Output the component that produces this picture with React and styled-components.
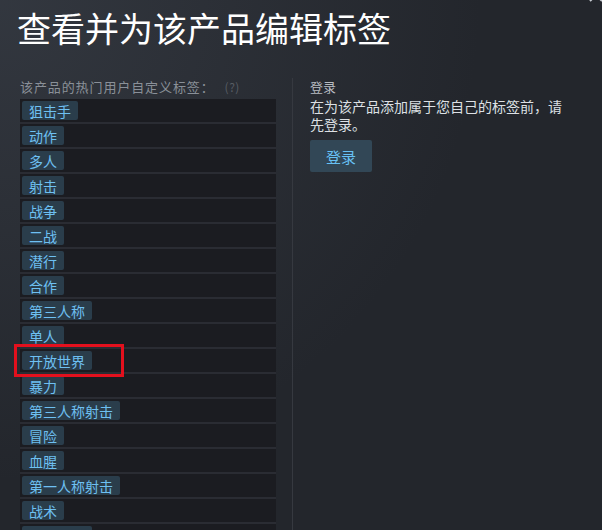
import React from 'react'
import styled, { createGlobalStyle } from 'styled-components'

const tags = [
  '狙击手', '动作', '多人', '射击', '战争', '二战', '潜行', '合作', '第三人称',
  '单人', '开放世界', '暴力', '第三人称射击', '冒险', '血腥', '第一人称射击', '战术', '现代战争',
]

const GlobalStyle = createGlobalStyle`
  html, body {
    margin: 0;
    padding: 0;
    height: 530px;
    overflow: hidden;
  }
  body {
    background: radial-gradient(circle at top left, rgba(74,81,92,.4) 0%, rgba(75,81,92,0) 60%), #23262c;
    font-family: "Noto Sans CJK SC", "Noto Sans", sans-serif;
  }
`

function App() {
  return (
    <Page>
      <GlobalStyle />
      <Close width="16" height="16" viewBox="0 0 16 16">
        <path d="M2 2 L14 14 M14 2 L2 14" stroke="#c8ccd2" strokeWidth="2" />
      </Close>
      <Title>查看并为该产品编辑标签</Title>
      <Body>
        <Left>
          <Label>
            该产品的热门用户自定义标签：<Help>(?)</Help>
          </Label>
          <List>
            {tags.map(t => (
              <Row key={t}>
                <Tag>{t}</Tag>
                {t === '开放世界' && <Highlight />}
              </Row>
            ))}
          </List>
        </Left>
        <Divider />
        <Right>
          <Heading>登录</Heading>
          <Note>在为该产品添加属于您自己的标签前，请先登录。</Note>
          <Button>登录</Button>
        </Right>
      </Body>
    </Page>
  )
}

export default App

const Page = styled.div`
    position: relative;
    height: 530px;
    padding: 0 0 0 17px;
    box-sizing: border-box;
    overflow: hidden;
`

const Close = styled.svg`
    position: absolute;
    top: -13px;
    right: -2px;
`

const Title = styled.h1`
    margin: 0;
    padding-top: 6px;
    font-size: 34px;
    line-height: 44px;
    font-weight: 400;
    color: #ffffff;
`

const Body = styled.div`
    display: flex;
    margin-top: 28px;
`

const Left = styled.div`
    width: 256px;
    margin-left: 3px;
    display: flex;
    flex-direction: column;
`

const Label = styled.div`
    font-size: 13px;
    line-height: 18px;
    color: #8a9098;
    letter-spacing: 0.9px;
    margin-bottom: 3px;
    white-space: nowrap;
`

const Help = styled.span`
    margin-left: 10px;
    color: #575c64;
    font-size: 12px;
    letter-spacing: 0.5px;
`

const List = styled.div`
    display: flex;
    flex-direction: column;
    gap: 2px;
    background: #2a2c33;
`

const Row = styled.div`
    position: relative;
    display: flex;
    height: 23px;
    padding: 2px;
    box-sizing: border-box;
    background: #1b1c21;
`

const Tag = styled.span`
    display: flex;
    align-items: center;
    height: 19px;
    padding: 0 7px;
    border-radius: 2px;
    background: #2a3d4b;
    color: #6ec0f2;
    font-size: 14px;
`

const Highlight = styled.div`
    position: absolute;
    z-index: 2;
    left: -6px;
    top: -5px;
    width: 110px;
    height: 33px;
    border: 3px solid #e3101d;
    box-sizing: border-box;
`

const Divider = styled.div`
    width: 1px;
    margin: 0 17px 0 16px;
    height: 460px;
    background: #363940;
`

const Right = styled.div`
    width: 262px;
    display: flex;
    flex-direction: column;
    align-items: flex-start;
`

const Heading = styled.div`
    font-size: 13px;
    line-height: 18px;
    color: #b8bcc2;
`

const Note = styled.div`
    font-size: 14px;
    line-height: 18px;
    color: #dde0e4;
    margin-top: 1px;
`

const Button = styled.div`
    margin-top: 7px;
    width: 62px;
    height: 32px;
    display: flex;
    align-items: center;
    justify-content: center;
    border-radius: 2px;
    background: #324756;
    color: #67c1f5;
    font-size: 15px;
`
